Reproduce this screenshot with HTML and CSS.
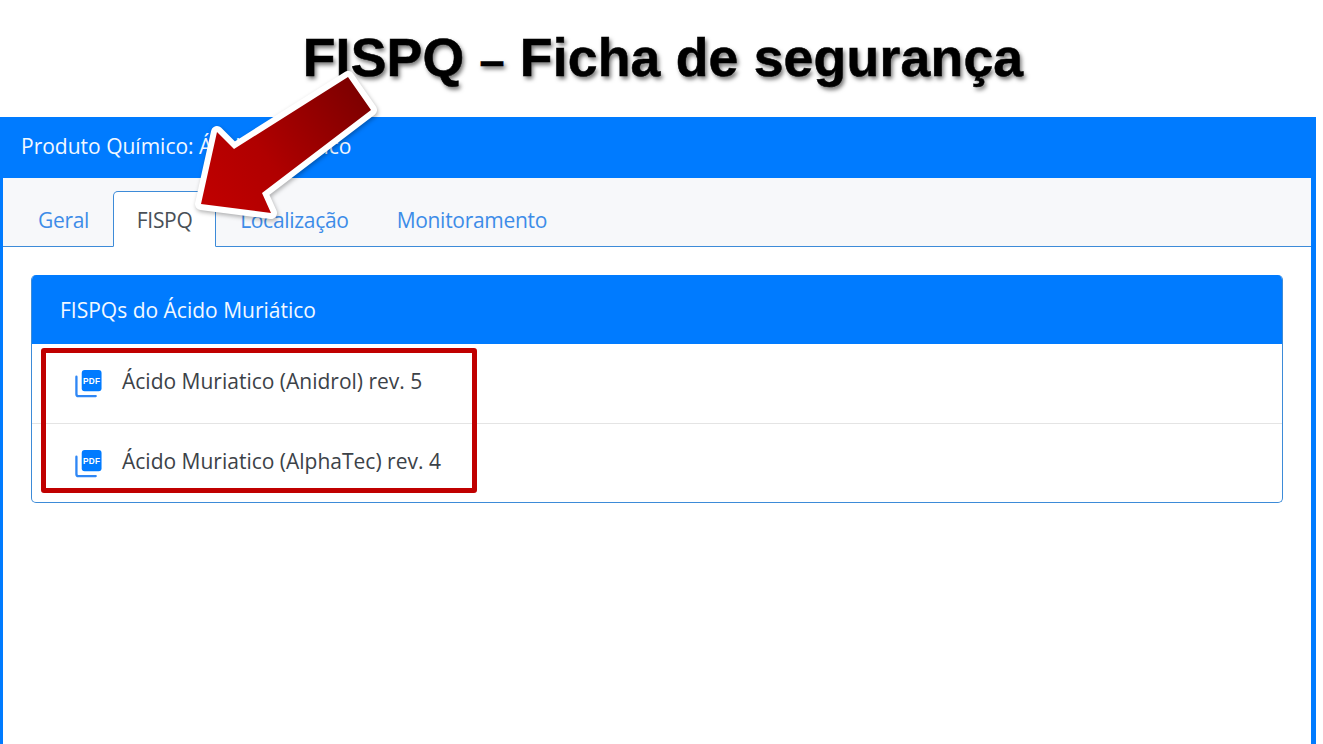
FILE: index.html
```html
<!DOCTYPE html>
<html lang="pt-BR">
<head>
    <meta charset="UTF-8">
    <title>FISPQ - Ficha de segurança</title>
    <link rel="stylesheet" href="styles.css">
</head>
<body>
<h1 class="slide-title">FISPQ <span class="title-dash">–</span> Ficha de segurança</h1>

<div class="main-card">
    <div class="main-header">Produto Químico: Ácido Muriático</div>

    <!-- tabs -->
    <ul class="tabs">
        <li class="tab">Geral</li>
        <li class="tab active">FISPQ</li>
        <li class="tab">Localização</li>
        <li class="tab">Monitoramento</li>
    </ul>

    <div class="tab-body">
        <div class="fispq-card">
            <div class="fispq-header">FISPQs do Ácido Muriático</div>
            <div class="fispq-row">
                <svg class="pdf-icon" viewBox="0 0 30 30">
                    <path class="pdf-back" d="M2.5 7v18a2 2 0 0 0 2 2h18"/>
                    <rect class="pdf-front" x="8" y="0" width="20.500" height="22" rx="3"/>
                    <text class="pdf-text" x="18.300" y="14.500">PDF</text>
                </svg>
                <span>Ácido Muriatico (Anidrol) rev. 5</span>
            </div>
            <div class="fispq-row">
                <svg class="pdf-icon" viewBox="0 0 30 30">
                    <path class="pdf-back" d="M2.5 7v18a2 2 0 0 0 2 2h18"/>
                    <rect class="pdf-front" x="8" y="0" width="20.500" height="22" rx="3"/>
                    <text class="pdf-text" x="18.300" y="14.500">PDF</text>
                </svg>
                <span>Ácido Muriatico (AlphaTec) rev. 4</span>
            </div>
        </div>
    </div>
</div>

<!-- slide annotations on top of the screenshot -->
<div class="red-box"></div>
<svg class="arrow" viewBox="0 0 1323 744">
    <defs>
        <linearGradient id="arrowRed" x1="360" y1="90" x2="205" y2="205" gradientUnits="userSpaceOnUse">
            <stop offset="0" stop-color="#7d0000"/>
            <stop offset="0.6" stop-color="#b00000"/>
            <stop offset="1" stop-color="#c00000"/>
        </linearGradient>
    </defs>
    <path class="arrow-line" d="M201 204 217 132 234 149 348 77 371 110 262 193 271 213Z"/>
    <path fill="url(#arrowRed)" d="M201 204 217 132 234 149 348 77 371 110 262 193 271 213Z"/>
</svg>
</body>
</html>
```

FILE: styles.css
```css
*{
    box-sizing: border-box;
}

body{
    margin: 0;
    height: 744px;
    overflow: hidden;
    background: white;
    font-family: "Open Sans", "Noto Sans", sans-serif;
    color: #3c4248;
}

/* TITLE */
.slide-title{
    margin: 0;
    height: 117px;
    padding: 26px 0 0 3px;
    text-align: center;
    font-family: "Liberation Sans", Arial, sans-serif;
    font-size: 53.6px;
    line-height: 62px;
    font-weight: bold;
    letter-spacing: 0.18px;
    color: black;
    -webkit-text-stroke: 0.5px black;
    text-shadow: 2px 3px 4px rgba(0, 0, 0, 0.55);
}

.title-dash{
    font-size: 45px;
}

/* MAIN CARD */
.main-card{
    width: 1316px;
    height: 627px;
    border: solid #007bff;
    border-width: 0 5px 0 3px;
}

.main-header{
    height: 61px;
    margin: 0 -5px 0 -3px;
    padding: 0 21px;
    background: #007bff;
    color: #f2f8ff;
    font-size: 21px;
    line-height: 59px;
}

/* TABS */
.tabs{
    display: flex;
    height: 69px;
    margin: 0;
    padding: 13px 0 0 11px;
    list-style: none;
    background: #f7f8fa;
    border-bottom: 1px solid #3d8bd8;
}

.tab{
    height: 56px;
    padding: 0 23px;
    border: 1px solid transparent;
    border-radius: 5px 5px 0 0;
    font-size: 21px;
    line-height: 56px;
    letter-spacing: -0.3px;
    color: #3d8ce8;
}

.tab.active{
    width: 103px;
    padding: 0;
    text-align: center;
    background: white;
    border-color: #3d8bd8;
    border-bottom-color: white;
    color: #495057;
}

.tab-body{
    padding: 28px 28px 0 28px;
}

/* FISPQ LIST */
.fispq-card{
    height: 228px;
    border: 1px solid #3d8bd8;
    border-top: none;
    border-radius: 5px;
    overflow: hidden;
}

.fispq-header{
    height: 69px;
    margin: 0 -1px;
    padding: 0 29px;
    background: #007bff;
    color: #f2f8ff;
    font-size: 21px;
    line-height: 70px;
}

.fispq-row{
    display: flex;
    align-items: flex-start;
    gap: 19px;
    height: 79px;
    padding: 23px 0 0 42px;
    font-size: 21px;
    line-height: 28px;
}

.fispq-row + .fispq-row{
    border-top: 1px solid #e4e4e4;
}

/* PDF ICON */
.pdf-icon{
    width: 29px;
    height: 29px;
    margin-top: 3px;
}

.pdf-back{
    fill: none;
    stroke: #2f87f5;
    stroke-width: 2.4;
    stroke-linecap: round;
}

.pdf-front{
    fill: #007bff;
}

.pdf-text{
    fill: white;
    font-family: "Liberation Sans", Arial, sans-serif;
    font-size: 8.5px;
    font-weight: bold;
    letter-spacing: 0.4px;
    text-anchor: middle;
}

/* ANNOTATIONS */
.red-box{
    position: absolute;
    left: 41px;
    top: 348px;
    width: 436px;
    height: 145px;
    border: 5px solid #c00000;
    border-radius: 3px;
}

.arrow{
    position: absolute;
    left: 0;
    top: 0;
    width: 1323px;
    height: 744px;
    filter: drop-shadow(1px 2px 2px rgba(0, 0, 0, 0.3));
}

.arrow-line{
    fill: white;
    stroke: white;
    stroke-width: 12;
    stroke-linejoin: round;
}
```
